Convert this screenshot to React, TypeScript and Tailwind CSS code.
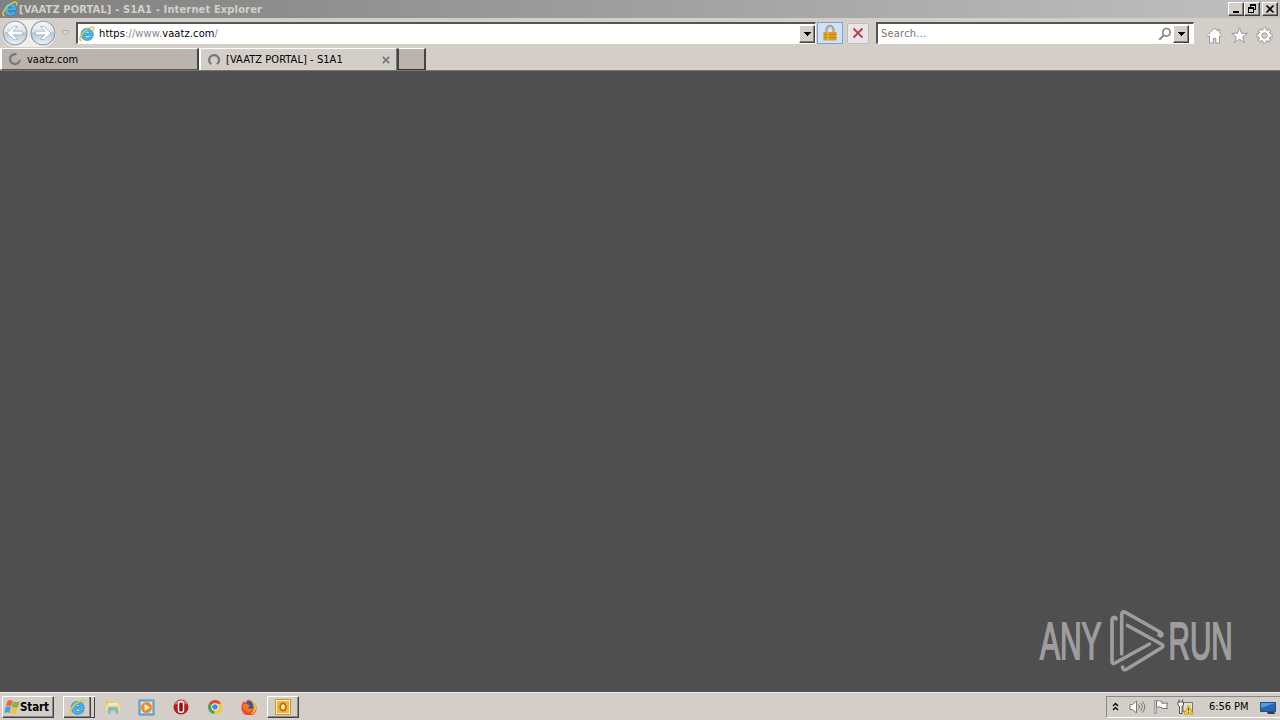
import React from "react";

const IeIcon = ({ className }: { className?: string }) => (
  <svg viewBox="0 0 16 16" className={className}>
    <path
      d="M14.400 9.500H6c.3 2.700 3.300 3 4.300 1.200h3.800c-1.500 5.300-12.100 5.500-12.100-2.400 0-8.300 12.800-8.300 12.400 1.200zM6 7.100h4.600C10.200 4.500 6.400 4.500 6 7.100z"
      fill="#45b4ea"
      stroke="#1b83c9"
      strokeWidth="0.600"
    />
    <path
      d="M2.600 14.700C-.6 14.500 1 9.500 5.500 5.200 9.500 1.400 14.300-.2 14.700 2.300c.1.800-.1 1.400-.5 2.100"
      fill="none"
      stroke="#f0c52f"
      strokeWidth="1.500"
    />
  </svg>
);

const ArrowIcon = ({ flip }: { flip?: boolean }) => (
  <svg viewBox="0 0 26 26" className="size-[26px] shrink-0">
    <defs>
      <linearGradient id="orb" x1="0" y1="0" x2="0" y2="1">
        <stop offset="0" stopColor="#fafbfc" />
        <stop offset="0.45" stopColor="#dde3e9" />
        <stop offset="0.5" stopColor="#b5c5d3" />
        <stop offset="1" stopColor="#eaf6fc" />
      </linearGradient>
    </defs>
    <circle cx="13" cy="13" r="11.900" fill="url(#orb)" stroke="#98a1aa" strokeWidth="1.300" />
    <path
      d="M5 13l7-6.500h3.500L11 11.200h9.500v3.600H11l4.500 4.700H12z"
      fill="#fff"
      stroke="#9aadbd"
      strokeWidth="0.700"
      transform={flip ? "translate(26 0) scale(-1 1)" : undefined}
    />
  </svg>
);

const Spinner = ({ open }: { open?: boolean }) => (
  <svg viewBox="0 0 14 14" className="size-[14px] shrink-0">
    <path
      d={open ? "M4.200 11.200A5 5 0 1 1 10 11.200" : "M11.900 7.800A5 5 0 1 1 8.500 2.300"}
      fill="none"
      stroke="#777"
      strokeWidth="2.200"
    />
  </svg>
);

const DropButton = () => (
  <span className="flex h-[18px] w-4 shrink-0 items-center justify-center border border-t-white border-l-white border-r-[#404040] border-b-[#404040] bg-[#d4d0c8] shadow-[inset_-1px_-1px_#808080]">
    <svg viewBox="0 0 7 4" className="h-1 w-[7px]" shapeRendering="crispEdges">
      <path d="M0 0h7L3.500 4z" fill="#000" />
    </svg>
  </span>
);

const WindowButton = ({ children }: { children: React.ReactNode }) => (
  <span className="flex h-[14px] w-4 items-center justify-center border border-t-white border-l-white border-r-[#404040] border-b-[#404040] bg-[#d4d0c8] shadow-[inset_-1px_-1px_#808080]">
    {children}
  </span>
);

const TitleBar = () => (
  <header className="flex h-[18px] items-center bg-linear-to-r from-[#808080] to-[#c0c0c0] pr-[2px] pl-[2px]">
    <IeIcon className="size-4 shrink-0" />
    <h1 className="ml-[1px] w-[260px] pt-[1px] text-[11px] leading-[18px] font-bold tracking-[0.150px] whitespace-nowrap text-[#d4d0c8]">
      [VAATZ PORTAL] - S1A1 - Internet Explorer
    </h1>
    <div className="ml-auto flex">
      <WindowButton>
        <svg viewBox="0 0 10 10" className="size-[10px]">
          <path d="M2 7h6v2H2z" />
        </svg>
      </WindowButton>
      <WindowButton>
        <svg viewBox="0 0 10 10" className="size-[10px]" shapeRendering="crispEdges">
          <path d="M3 0h6v6H7V5h1V2H4v1H3zM1 3h6v6H1zM2 5v3h4V5z" fillRule="evenodd" />
        </svg>
      </WindowButton>
      <span className="w-[2px]" />
      <WindowButton>
        <svg viewBox="0 0 10 10" className="size-[10px]">
          <path d="M1.500 1.500l7 7M8.500 1.500l-7 7" stroke="#000" strokeWidth="1.600" />
        </svg>
      </WindowButton>
    </div>
  </header>
);

const Toolbar = () => (
  <nav className="flex h-[30px] items-center pl-[2px]">
    <div className="flex h-[27px] items-center gap-[2px] rounded-full bg-[#f0eeeb]">
      <ArrowIcon />
      <ArrowIcon flip />
    </div>
    <svg viewBox="0 0 9 6" className="ml-[5px] h-[6px] w-[9px]">
      <path d="M.8.700h7.400L4.500 5z" fill="#e5e2de" stroke="#aaa6a1" />
    </svg>
    <div className="ml-[6px] flex h-[22px] w-[740px] items-center border-t-2 border-r border-b border-l-2 border-t-[#555] border-r-white border-b-white border-l-[#555] bg-white pl-[1px]">
      <IeIcon className="size-4 shrink-0" />
      <span className="ml-1 flex-1 pt-[2px] text-[11px] tracking-[0.110px] text-[#888]">
        <span className="text-black">https</span>://www.<span className="text-black">vaatz.com</span>/
      </span>
      <DropButton />
    </div>
    <span className="ml-[1px] flex h-[22px] w-[26px] items-center justify-center border border-[#7da2d4] bg-[#cfe0f7]">
      <svg viewBox="0 0 14 16" className="h-4 w-[14px]">
        <path d="M3.500 8V4.500a3.500 3.500 0 0 1 7 0V8" fill="none" stroke="#91845c" strokeWidth="2" />
        <path d="M3.500 8V4.500a3.500 3.500 0 0 1 7 0V8" fill="none" stroke="#ddd4ad" strokeWidth="0.700" />
        <path d="M.500 7h13v8.500H.500z" fill="#d9a01f" />
        <path d="M.500 9.500h13M.500 12.500h13" stroke="#b9811a" strokeWidth="0.800" />
        <path d="M5 7v8.500" stroke="#efc448" />
      </svg>
    </span>
    <span className="ml-1 flex h-[21px] w-[22px] items-center justify-center rounded-[2px] border border-[#bfbcbd] bg-[#e9e6ea]">
      <svg viewBox="0 0 12 12" className="size-3">
        <path d="M1.500 1.500l9 9M10.500 1.500l-9 9" stroke="#b7454f" strokeWidth="2" />
      </svg>
    </span>
    <div className="ml-[7px] flex h-[22px] w-[318px] items-center border-t-2 border-r border-b border-l-2 border-t-[#555] border-r-white border-b-white border-l-[#555] bg-white pr-1 pl-[3px]">
      <span className="flex-1 pt-[2px] text-[11px] tracking-[0.220px] text-[#777]">Search...</span>
      <svg viewBox="0 0 14 14" className="mr-[1px] size-[14px]">
        <circle cx="8.500" cy="5.300" r="3.800" fill="none" stroke="#888" strokeWidth="1.700" />
        <path d="M5.700 8.200L1.300 12.700" stroke="#888" strokeWidth="2" />
      </svg>
      <DropButton />
    </div>
    <div className="ml-3 flex gap-2 pt-1">
      <svg viewBox="0 0 17 17" className="size-[17px]" fill="#fff" stroke="#999" strokeLinejoin="round">
        <path d="M8.500 1L1 8.500l1.300 1.300 1.200-1V16h3.700v-4.500h2.600V16h3.700V8.800l1.200 1L16 8.500l-2.200-2.200V2.500h-2v1.800z" />
      </svg>
      <svg viewBox="0 0 17 17" className="size-[17px]" fill="#fff" stroke="#999" strokeLinejoin="round">
        <path d="M8.500.800l2 5.400 5.800.200-4.600 3.500 1.700 5.600-4.900-3.200-4.900 3.200 1.700-5.600L.700 6.400l5.800-.200z" />
      </svg>
      <svg viewBox="0 0 17 17" className="size-[17px]">
        <path d="M8.500.5v16M.5 8.500h16M2.800 2.800l11.400 11.400M14.200 2.800L2.800 14.200" stroke="#999" strokeWidth="3.800" />
        <circle cx="8.500" cy="8.500" r="6" fill="#fff" stroke="#999" />
        <path d="M8.500 1.300v14.400M1.300 8.500h14.400M3.400 3.400l10.200 10.200M13.600 3.400L3.400 13.600" stroke="#fff" strokeWidth="2" />
        <circle cx="8.500" cy="8.500" r="2.700" fill="#d4cec8" stroke="#999" />
      </svg>
    </div>
  </nav>
);

const Tabs = () => (
  <div className="flex h-[23px] border-b border-[#777]">
    <div className="flex w-[199px] items-center border-t border-r-2 border-b border-l-2 border-t-white border-r-[#444] border-b-[#555] border-l-white bg-[#bbb4ae] pl-[6px]">
      <Spinner />
      <span className="ml-[5px] pt-[2px] text-[11px] tracking-[-0.020px]">vaatz.com</span>
    </div>
    <div className="flex w-[198px] items-center border-t border-r border-l-2 border-white border-r-[#777] pl-[6px]">
      <Spinner open />
      <span className="ml-[5px] pt-[2px] text-[11px] tracking-[0.060px]">[VAATZ PORTAL] - S1A1</span>
      <svg viewBox="0 0 8 8" className="mr-[6px] ml-auto size-2">
        <path d="M.800.800l6.400 6.400M7.200.800L.800 7.200" stroke="#777" strokeWidth="1.700" />
      </svg>
    </div>
    <div className="w-[29px] border-t border-r-2 border-b border-l-2 border-t-white border-r-[#444] border-b-[#333] border-l-[#444] bg-[#bbb4ae]" />
  </div>
);

const Watermark = () => (
  <svg
    viewBox="0 0 200 64"
    className="h-16 w-[200px] overflow-visible fill-[#9e9e9e] stroke-[#9e9e9e] font-['Liberation_Sans']"
  >
    <text transform="translate(3 51) scale(0.575 1)" fontSize="52" strokeWidth="1.800">
      ANY
    </text>
    <g fill="none" strokeWidth="3.600" strokeLinejoin="round" strokeLinecap="round">
      <path d="M79 11q0-2-2-1.500-2 .500-2 3V53q0 3.500 3 2L112.500 36" />
      <path d="M84.700 46V7q0-4.500 4-2.500L123 24q3.500 2 1 4l-2-1" />
      <path d="M90.500 17.500L125 36.500q2 1.500 0 3L90 61q-4 2-4.500-2" />
    </g>
    <text transform="translate(131.500 51) scale(0.570 1)" fontSize="52" strokeWidth="1.800">
      RUN
    </text>
  </svg>
);

const Taskbar = () => (
  <footer className="flex h-7 items-center border-t border-[#eee] pt-[1px] pl-[2px] text-[11px]">
    <button className="flex h-[22px] w-[52px] items-center border border-t-white border-l-white border-r-[#444] border-b-[#444] pl-[1px] font-bold shadow-[inset_-1px_-1px_#888]">
      <svg viewBox="0 0 16 16" className="size-4 shrink-0">
        <path d="M3.500 2q3-2 5.200 0L7.200 7.500q-3-1.500-5.300.2z" fill="#e76b31" />
        <path d="M9.300 2.500q3 1.500 6.200-.2L14 8q-3 1.500-6.200-.2z" fill="#80b641" />
        <path d="M1.600 8.500q3-2 5.200 0l-1.500 5.500q-3-1.500-5.200.2z" fill="#4b9bd7" />
        <path d="M7.500 8.800q3 1.500 6.200-.2l-1.500 5.600q-3 1.500-6.200-.2z" fill="#f2c23c" />
      </svg>
      <span className="pt-[1px] text-[11.500px] tracking-[-0.100px]">Start</span>
    </button>
    <div className="ml-[9px] flex h-[22px] w-[32px] border-t border-l border-white">
      <span className="flex w-7 items-center justify-center border-r border-b border-[#444] shadow-[inset_-1px_-1px_#888]">
        <IeIcon className="size-[17px]" />
      </span>
      <span className="w-[4px] border-r border-b border-[#444]" />
    </div>
    <svg viewBox="0 0 16 16" className="ml-[10px] size-4">
      <path d="M1 2h5l1 1.500h7V13H1z" fill="#ebc95f" />
      <path d="M3 4h10v4H3z" fill="#f9efb6" />
      <path d="M1 6h14v6H1z" fill="#f6dc82" />
      <path d="M3 15V9.500q0-1.500 1.500-1.500h7Q13 8 13 9.500V15h-2.500v-3.500h-5V15z" fill="#72bcdf" />
    </svg>
    <svg viewBox="0 0 17 17" className="ml-[17px] size-[17px]">
      <path d="M1 1h15v15H1z" fill="#86badf" stroke="#4d8bbd" />
      <path d="M3 3h11v11H3z" fill="#d9e9f4" />
      <circle cx="8.500" cy="8.500" r="5.500" fill="#f18a20" />
      <path d="M6.700 5.300l5 3.200-5 3.200z" fill="#fff" />
    </svg>
    <svg viewBox="0 0 16 16" className="ml-[18px] size-4">
      <circle cx="8" cy="8" r="7.500" fill="#b61c21" />
      <path d="M2 5q6-6 12 0" stroke="#dd7773" strokeWidth="2" fill="none" />
      <rect x="5.500" y="2.800" width="5" height="10.400" rx="2" fill="#941116" stroke="#fff" strokeWidth="1.400" />
    </svg>
    <svg viewBox="0 0 16 16" className="ml-[18px] size-4">
      <circle cx="8" cy="8" r="7" fill="#f5c72d" />
      <path d="M8 8L2 4.500A7 7 0 0 1 14.100 4.700H8z" fill="#df4734" />
      <path d="M8 8l-1 7A7 7 0 0 1 2 4.400z" fill="#45a451" />
      <circle cx="8" cy="8" r="3.700" fill="#fff" />
      <circle cx="8" cy="8" r="2.800" fill="#4688df" />
    </svg>
    <svg viewBox="0 0 16 16" className="ml-[18px] size-4">
      <path d="M7 .500q3 .500 4.500 2.500Q15.500 5 15.700 9A7.600 7.600 0 0 1 .400 9Q.200 6 1.500 4l1-2 1.500 1.700z" fill="#ee4b2b" />
      <circle cx="9" cy="6.500" r="4.300" fill="#3757ad" />
      <path d="M8.500.500q7 3 7 8.500-1 5-6 6.500 4-4 3-8Q12 3 8.500.500z" fill="#fbb82a" />
      <path d="M1.500 6.500q2-3 6-1L9 7 7 8.500q1.500 2.500 4.500.500-1 4.500-5.500 3.500Q2 11 1.500 6.500z" fill="#f47a25" />
    </svg>
    <div className="ml-[10px] flex h-[22px] w-8 items-center justify-center border border-t-white border-l-white border-r-[#444] border-b-[#444] shadow-[inset_-1px_-1px_#888]">
      <svg viewBox="0 0 16 16" className="size-4">
        <path d="M.5.500h15v15H.500z" fill="#fff3cc" stroke="#d99313" />
        <path d="M2 2h12v12H2z" fill="#f0b43c" />
        <ellipse cx="8" cy="8" rx="2.800" ry="3.700" fill="#fbe7ac" stroke="#b8700b" strokeWidth="1.800" />
      </svg>
    </div>
    <div className="ml-auto flex h-[22px] w-[174px] items-center border-t border-b border-l border-t-[#888] border-b-white border-l-[#888] pl-[5px]">
      <svg viewBox="0 0 7 9" className="mb-[2px] h-[9px] w-[7px]" fill="none" stroke="#000" strokeWidth="1.300">
        <path d="M1 4l2.500-2.500L6 4M1 8l2.500-2.500L6 8" />
      </svg>
      <svg viewBox="0 0 17 16" className="ml-[10px] h-4 w-[17px]" fill="none" stroke="#777">
        <path d="M1 5.500h2.500L7.500 2v12L3.500 10.500H1z" fill="#fff" />
        <path d="M9.500 5.500q2 2.500 0 5M11.500 4q3.500 4 0 8M13.500 2.500q4.500 5.500 0 11" />
      </svg>
      <svg viewBox="0 0 17 16" className="ml-[7px] h-4 w-[17px]">
        <path d="M2.500 1v14" stroke="#777" strokeWidth="2" />
        <path d="M2.500 1.500v13" stroke="#eee" strokeWidth="0.700" />
        <path d="M3.500 2q3-1 5.500.500v1.800l6-.3-1.500 3 1 2.500H9V8.500q-3-1.500-5.500 0z" fill="#fff" stroke="#777" />
      </svg>
      <svg viewBox="0 0 17 16" className="ml-[7px] h-4 w-[17px]">
        <path d="M6 3.500h9.500v9H6z" fill="#e2dfda" stroke="#777" />
        <path d="M2 .500v3M5.500.500v3" stroke="#555" />
        <path d="M1 3h5.500v3L5 7.500v7H2.500v-7L1 6z" fill="#fff" stroke="#555" />
        <path d="M11.500 6l4.500 9H7z" fill="#f4d23e" stroke="#c9a51c" />
        <path d="M11.500 9v3M11.500 13v1" stroke="#604d00" />
      </svg>
      <time className="ml-[15px] w-10 pt-[1px] tracking-[-0.050px] whitespace-nowrap">6:56 PM</time>
      <svg viewBox="0 0 16 15" className="ml-[11px] h-[15px] w-4">
        <path d="M.500 2.500h15v9H.500z" fill="#2469b6" stroke="#244d85" />
        <path d="M1 3h14L1 8z" fill="#599bda" />
        <path d="M7 12h7l1.500 2H8z" fill="#353b45" />
      </svg>
    </div>
  </footer>
);

export default function App() {
  return (
    <div className="flex h-screen w-screen flex-col overflow-hidden bg-[#d4cec8] font-['DejaVu_Sans_Condensed','DejaVu_Sans',sans-serif] text-black">
      <TitleBar />
      <Toolbar />
      <Tabs />
      <main className="flex flex-1 items-end justify-end bg-[#4f4f4f] pr-[43px] pb-[20px]">
        <Watermark />
      </main>
      <Taskbar />
    </div>
  );
}
